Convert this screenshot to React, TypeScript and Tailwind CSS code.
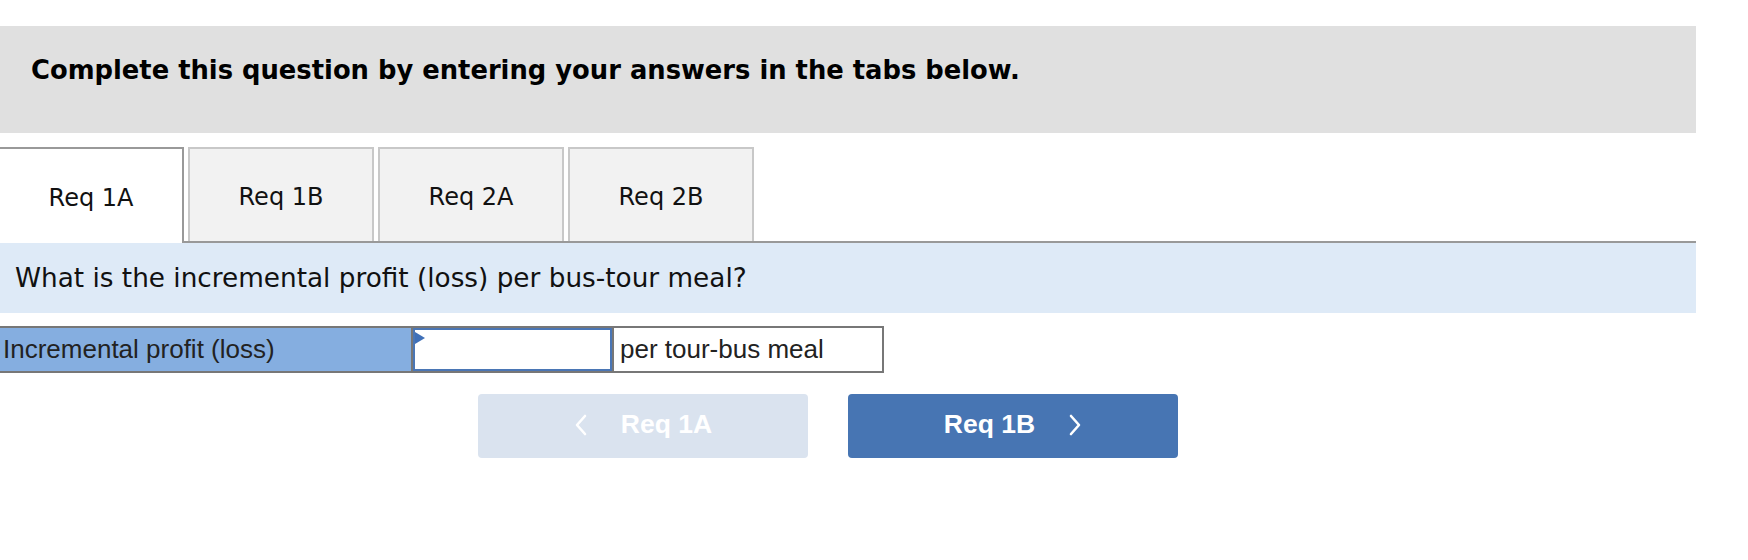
import React from 'react';

const tabs = ['Req 1A', 'Req 1B', 'Req 2A', 'Req 2B'];

function Chevron({ dir }: { dir: 'left' | 'right' }) {
  return (
    <svg width="14" height="22" viewBox="0 0 14 22" className="shrink-0">
      <polyline
        points={dir === 'left' ? '11,2 3,11 11,20' : '3,2 11,11 3,20'}
        fill="none"
        stroke="white"
        strokeWidth="2.6"
        strokeLinecap="round"
        strokeLinejoin="round"
      />
    </svg>
  );
}

export default function App() {
  return (
    <div className="w-[1748px] h-[560px] bg-white pt-[26px] font-['DejaVu_Sans',Verdana,sans-serif]">
      <div className="w-[1696px]">
        {/* instructions bar */}
        <div className="h-[107px] bg-[#e0e0e0] flex items-center pl-[31px] pb-[18px]">
          <span className="text-[25.8px] font-bold text-black">
            Complete this question by entering your answers in the tabs below.
          </span>
        </div>

        {/* tabs */}
        <div className="mt-[14px] flex h-[96px]">
          <div className="w-[184px] h-[96px] bg-white border-t-2 border-r-2 border-[#999] flex items-center justify-center pt-[4px] text-[24px] text-[#111]">
            {tabs[0]}
          </div>
          <div className="flex-1 flex items-start border-b-2 border-[#999]">
            {tabs.slice(1).map(t => (
              <div
                key={t}
                className="ml-[4px] w-[186px] h-[94px] bg-[#f2f2f2] border-2 border-[#c8c8c8] border-b-0 flex items-center justify-center pt-[4px] text-[24px] text-[#111]"
              >
                {t}
              </div>
            ))}
          </div>
        </div>

        {/* question */}
        <div className="h-[70px] bg-[#deeaf7] flex items-center pl-[15px] pt-[2px] text-[26.3px] text-[#111]">
          What is the incremental profit (loss) per bus-tour meal?
        </div>
      </div>

      {/* answer row */}
      <div className="mt-[13px] w-[884px] h-[47px] flex border-y-2 border-r-2 border-[#777] font-['Liberation_Sans',Arial,sans-serif] text-[26px] text-[#222]">
        <div className="w-[413px] bg-[#85aee0] flex items-center pl-[3px] border-r-2 border-[#777]">
          Incremental profit (loss)
        </div>
        <div className="relative w-[199px] border-2 border-[#4a76b5] bg-white">
          <svg width="10" height="12" viewBox="0 0 10 12" className="absolute left-0 top-[2px]">
            <polygon points="0,0 10,6 0,12" fill="#3f70b8" />
          </svg>
        </div>
        <div className="flex-1 flex items-center pl-[6px] border-l-2 border-[#777] bg-white">
          per tour-bus meal
        </div>
      </div>

      {/* navigation buttons */}
      <div className="mt-[21px] ml-[478px] flex gap-[40px] font-['Liberation_Sans',Arial,sans-serif]">
        <button className="w-[330px] h-[64px] rounded-[4px] bg-[#dae3ef] flex items-center justify-center gap-[33px] pb-[3px] text-white text-[26.5px] font-bold">
          <Chevron dir="left" />
          <span>Req 1A</span>
        </button>
        <button className="w-[330px] h-[64px] rounded-[4px] bg-[#4775b3] flex items-center justify-center gap-[33px] pb-[3px] text-white text-[26.5px] font-bold">
          <span>Req 1B</span>
          <Chevron dir="right" />
        </button>
      </div>
    </div>
  );
}
